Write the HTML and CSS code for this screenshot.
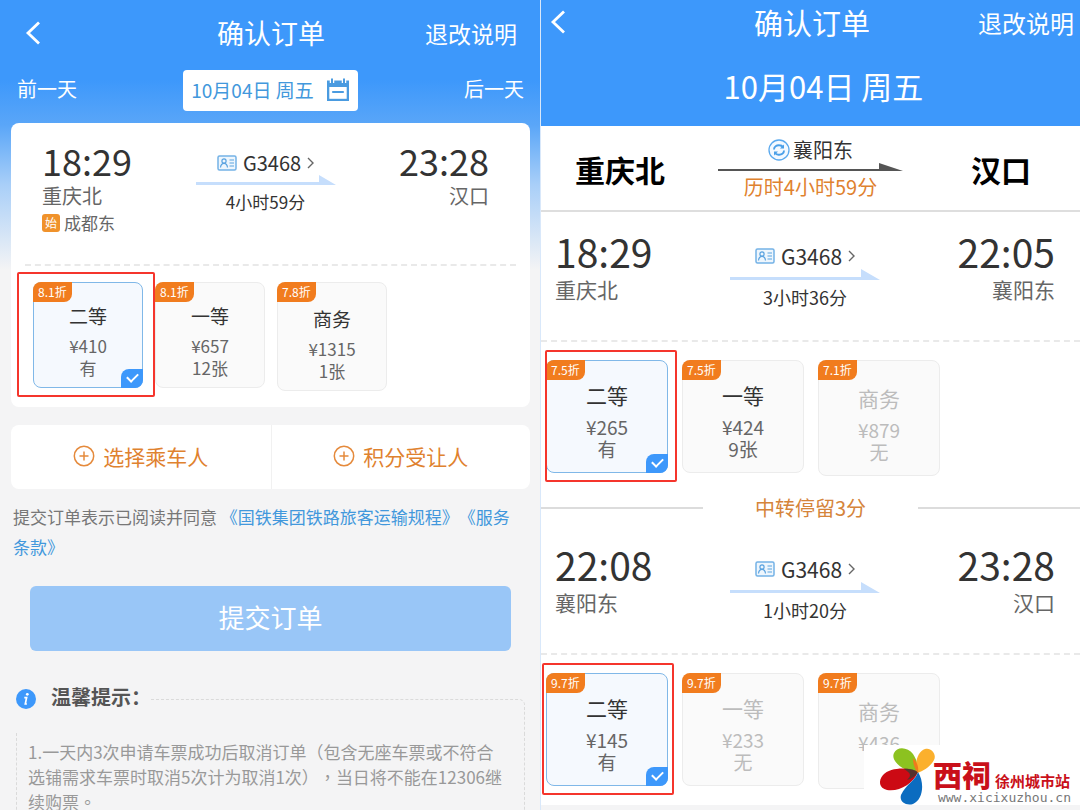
FILE: index.html
```html
<!DOCTYPE html>
<html lang="zh-CN">
<head>
<meta charset="utf-8">
<meta name="viewport" content="width=device-width, initial-scale=1">
<title>确认订单</title>
<link rel="stylesheet" href="styles.css">
</head>
<body>
<svg class="sprite" aria-hidden="true">
  <symbol id="back" viewBox="0 0 16 24"><path d="M14 1.500 3 12l11 10.500" fill="none" stroke="#fff" stroke-width="2.800"/></symbol>
  <symbol id="idcard" viewBox="0 0 20 16">
    <rect x="1" y="1" width="18" height="14" rx="1.500" fill="#eef6fd" stroke="#74b2e6" stroke-width="1.500"/>
    <circle cx="7" cy="6" r="2.100" fill="none" stroke="#5ba3e0" stroke-width="1.200"/>
    <path d="M3.500 12.500c.3-2.600 1.600-4.100 3.500-4.100s3.200 1.500 3.500 4.100M12.500 5h4.500M12.500 8h4.500M12.500 11h4.500" fill="none" stroke="#5ba3e0" stroke-width="1.200"/>
  </symbol>
  <symbol id="next" viewBox="0 0 7 12"><path d="M1 1l5 5-5 5" fill="none" stroke="#666" stroke-width="1.400"/></symbol>
  <symbol id="plus" viewBox="0 0 22 22"><circle cx="11" cy="11" r="9.700" fill="none" stroke="#e58a3c" stroke-width="1.500"/><path d="M11 6.500v9M6.500 11h9" stroke="#e58a3c" stroke-width="1.500"/></symbol>
</svg>
<main class="board">
  <section class="pane pane--direct">
    <header class="bar">
      <button class="bar__back" type="button" aria-label="返回"><svg class="ico-back"><use href="#back"/></svg></button>
      <h1 class="bar__title">确认订单</h1>
      <a class="bar__link" href="#">退改说明</a>
    </header>
    <nav class="days">
      <a class="days__link" href="#">前一天</a>
      <button class="days__date" type="button">10月04日 周五
        <svg class="ico-cal" viewBox="0 0 24 24" aria-hidden="true"><path d="M1 2.500h22V23H1z" fill="#4a9be0"/><path d="M3.300 9h17.400v11.800H3.300z" fill="#fff"/><path d="M6 0v5M18 0v5" stroke="#fff" stroke-width="4.500"/><path d="M6 .5v5M18 .5v5" stroke="#4a9be0" stroke-width="2"/><path d="M7 14h10" stroke="#4a9be0" stroke-width="2.200" stroke-linecap="round"/></svg>
      </button>
      <a class="days__link" href="#">后一天</a>
    </nav>
    <article class="card">
      <div class="leg">
        <div class="stop">
          <time class="stop__time">18:29</time>
          <span class="stop__city">重庆北</span>
          <span class="stop__origin"><b class="stop__mark">始</b>成都东</span>
        </div>
        <div class="ride">
          <a class="ride__train" href="#"><svg class="ico-id"><use href="#idcard"/></svg>G3468<svg class="ico-next"><use href="#next"/></svg></a>
          <svg class="ride__arrow" viewBox="0 0 140 10" aria-hidden="true"><path d="M0 7h123V0l17 10H0z" fill="#c6defc"/></svg>
          <span class="ride__span">4小时59分</span>
        </div>
        <div class="stop stop--end">
          <time class="stop__time">23:28</time>
          <span class="stop__city">汉口</span>
        </div>
      </div>
      <div class="seats">
        <label class="seat seat--on"><span class="seat__tag">8.1折</span><span class="seat__name">二等</span><span class="seat__fare">¥410</span><span class="seat__left">有</span><input class="seat__pick" type="radio" name="direct" checked><i class="frame"></i></label>
        <label class="seat"><span class="seat__tag">8.1折</span><span class="seat__name">一等</span><span class="seat__fare">¥657</span><span class="seat__left">12张</span><input class="seat__pick" type="radio" name="direct"></label>
        <label class="seat seat--low"><span class="seat__tag">7.8折</span><span class="seat__name">商务</span><span class="seat__fare">¥1315</span><span class="seat__left">1张</span><input class="seat__pick" type="radio" name="direct"></label>
      </div>
    </article>
    <div class="people">
      <button class="people__add" type="button"><svg class="ico-plus"><use href="#plus"/></svg>选择乘车人</button>
      <button class="people__add" type="button"><svg class="ico-plus"><use href="#plus"/></svg>积分受让人</button>
    </div>
    <p class="terms">提交订单表示已阅读并同意 <a href="#">《国铁集团铁路旅客运输规程》</a><a href="#">《服务条款》</a></p>
    <button class="submit" type="button">提交订单</button>
    <section class="tips">
      <div class="tips__head">
        <svg class="ico-info" viewBox="0 0 20 20" aria-hidden="true"><circle cx="10" cy="10" r="10" fill="#3d98fb"/><circle cx="11.300" cy="5.300" r="1.400" fill="#fff"/><path d="M8.300 8.700h2.300l-1.300 6.300h1.600" fill="none" stroke="#fff" stroke-width="1.700"/></svg>
        <h2 class="tips__title">温馨提示：</h2>
        <span class="tips__rule"></span>
      </div>
      <p class="tips__text">1.一天内3次申请车票成功后取消订单（包含无座车票或不符合<br>选铺需求车票时取消5次计为取消1次）<span class="mid" lang="zh-TW">，</span>当日将不能在12306继<br>续购票<span class="mid" lang="zh-TW">。</span></p>
    </section>
  </section>

  <section class="pane pane--transfer">
    <header class="top">
      <div class="bar">
        <button class="bar__back" type="button" aria-label="返回"><svg class="ico-back"><use href="#back"/></svg></button>
        <h1 class="bar__title">确认订单</h1>
        <a class="bar__link" href="#">退改说明</a>
      </div>
      <p class="top__date">10月04日 周五</p>
    </header>
    <div class="content">
      <div class="route">
        <strong class="route__city">重庆北</strong>
        <div class="route__via">
          <span class="route__stop"><svg class="ico-swap" viewBox="0 0 22 22" aria-hidden="true"><circle cx="11" cy="11" r="10" fill="#f3f9ff" stroke="#5aa9ee" stroke-width="1.300"/><path d="M6 10.500c0-3 2.500-4.500 5.500-4.200 1.500.1 2.700.7 3.500 1.700M16 11.500c0 3-2.500 4.500-5.500 4.200-1.500-.1-2.700-.7-3.500-1.700" fill="none" stroke="#4a9fe8" stroke-width="1.900"/><path d="M16 5.500v4h-4zM6 16.500v-4h4z" fill="#4a9fe8"/></svg>襄阳东</span>
          <svg class="route__arrow" viewBox="0 0 185 8" aria-hidden="true"><path d="M0 6h161V0l24 8H0z" fill="#555"/></svg>
          <span class="route__total">历时4小时59分</span>
        </div>
        <strong class="route__city route__city--end">汉口</strong>
      </div>
      <div class="leg">
        <div class="stop">
          <time class="stop__time">18:29</time>
          <span class="stop__city">重庆北</span>
        </div>
        <div class="ride">
          <a class="ride__train" href="#"><svg class="ico-id"><use href="#idcard"/></svg>G3468<svg class="ico-next"><use href="#next"/></svg></a>
          <svg class="ride__arrow" viewBox="0 0 150 11" aria-hidden="true"><path d="M0 8h131V0l19 11H0z" fill="#c6defc"/></svg>
          <span class="ride__span">3小时36分</span>
        </div>
        <div class="stop stop--end">
          <time class="stop__time">22:05</time>
          <span class="stop__city">襄阳东</span>
        </div>
      </div>
      <div class="seats">
        <label class="seat seat--on"><span class="seat__tag">7.5折</span><span class="seat__name">二等</span><span class="seat__fare">¥265</span><span class="seat__left">有</span><input class="seat__pick" type="radio" name="first" checked><i class="frame"></i></label>
        <label class="seat"><span class="seat__tag">7.5折</span><span class="seat__name">一等</span><span class="seat__fare">¥424</span><span class="seat__left">9张</span><input class="seat__pick" type="radio" name="first"></label>
        <label class="seat seat--low seat--off"><span class="seat__tag">7.1折</span><span class="seat__name">商务</span><span class="seat__fare">¥879</span><span class="seat__left">无</span><input class="seat__pick" type="radio" name="first" disabled></label>
      </div>
      <p class="change">中转停留3分</p>
      <div class="leg">
        <div class="stop">
          <time class="stop__time">22:08</time>
          <span class="stop__city">襄阳东</span>
        </div>
        <div class="ride">
          <a class="ride__train" href="#"><svg class="ico-id"><use href="#idcard"/></svg>G3468<svg class="ico-next"><use href="#next"/></svg></a>
          <svg class="ride__arrow" viewBox="0 0 150 11" aria-hidden="true"><path d="M0 8h131V0l19 11H0z" fill="#c6defc"/></svg>
          <span class="ride__span">1小时20分</span>
        </div>
        <div class="stop stop--end">
          <time class="stop__time">23:28</time>
          <span class="stop__city">汉口</span>
        </div>
      </div>
      <div class="seats">
        <label class="seat seat--on"><span class="seat__tag">9.7折</span><span class="seat__name">二等</span><span class="seat__fare">¥145</span><span class="seat__left">有</span><input class="seat__pick" type="radio" name="second" checked><i class="frame frame--left"></i></label>
        <label class="seat seat--off"><span class="seat__tag">9.7折</span><span class="seat__name">一等</span><span class="seat__fare">¥233</span><span class="seat__left">无</span><input class="seat__pick" type="radio" name="second" disabled></label>
        <label class="seat seat--low seat--off"><span class="seat__tag">9.7折</span><span class="seat__name">商务</span><span class="seat__fare">¥436</span><span class="seat__left">无</span><input class="seat__pick" type="radio" name="second" disabled></label>
      </div>
    </div>
  </section>
  <aside class="brand">
    <svg class="brand__flower" viewBox="0 0 60 60" aria-hidden="true">
      <path d="M42 28C28 27 14 16 18 8c3-7 14-6 19 1 4 6 6 13 5 19z" fill="#8cc220"/>
      <path d="M41 28C38 18 42 6 49 4c6-2 12 5 9 11-3 6-10 11-17 13z" fill="#fbb02d"/>
      <path d="M42 27C34 22 14 22 7 30c-5 6-4 13 4 15 12 2 26-6 31-18z" fill="#cc0a14"/>
      <path d="M42 27c-2 8-12 12-17 23-2 7 5 11 12 9 10-4 12-21 5-32z" fill="#0b6cc0"/>
      <path d="M28 24c4-1 10 0 14 3-2 4-7 7-11 8 4-4 5-6-3-11z" fill="#17463c" opacity=".65"/>
      <path d="M37 13c4 4 6 9 5 15-4-5-5-10-5-15z" fill="#f07a1c"/>
    </svg>
    <div class="brand__words">
      <span class="brand__name"><b class="brand__big">西祠</b>徐州城市站</span>
      <span class="brand__url">www.xicixuzhou.cn</span>
    </div>
  </aside>
</main>
</body>
</html>
```
FILE: styles.css
```css
* { box-sizing: border-box; }
body, h1, h2, p { margin: 0; }
body {
  font-family: "Noto Sans CJK SC", sans-serif;
  color: #333;
  text-spacing-trim: space-all;
}
button { font: inherit; color: inherit; border: 0; padding: 0; background: none; cursor: pointer; }
a { color: inherit; text-decoration: none; }
svg { display: block; flex: none; }
.sprite { position: absolute; width: 0; height: 0; }

.board {
  position: relative;
  display: grid;
  grid-template-columns: 1fr 1fr;
  height: 100vh;
  overflow: hidden;
}
.pane { min-width: 0; overflow: hidden; }
.pane--direct {
  padding: 0 10px 0 11px;
  background: linear-gradient(#3d98fb 0, #3d98fb 80px, #5aa6f8 125px, #a9cff8 185px, #f4f4f5 270px);
}
.pane--transfer { background: #f4f4f5; border-left: 1px solid #d9e8fa; }

/* title bar */
.bar {
  display: grid;
  grid-template-columns: 1fr auto 1fr;
  align-items: center;
  height: 65px;
  padding: 0 13px 0 14px;
  color: #fff;
}
.bar__back { justify-self: start; }
.bar__title { font-size: 27px; font-weight: 400; line-height: 40px; }
.bar__link { justify-self: end; font-size: 23px; }
.ico-back { width: 16px; height: 24px; }
.top { background: #3d98fb; color: #fff; }
.top .bar { height: 44px; padding: 0 6px 0 9px; }
.top .bar__title { font-size: 29px; }
.top .bar__link { font-size: 24px; }
.top__date { padding: 2px 0 0 26px; font-size: 31px; line-height: 80px; text-align: center; }

/* day switcher */
.days {
  display: flex;
  justify-content: space-between;
  padding: 5px 6px 12px;
  color: #fff;
  font-size: 20px;
  line-height: 37px;
}
.days__date {
  display: flex;
  align-items: center;
  gap: 12px;
  height: 41px;
  padding: 0 8px 2px;
  border-radius: 4px;
  background: #fff;
  color: #4298dc;
  font-size: 19px;
}
.ico-cal { width: 24px; height: 24px; }

/* journey */
.card { border-radius: 8px; background: #fff; }
.leg {
  display: grid;
  grid-template-columns: 1fr auto 1fr;
  padding: 16px 25px 30px 14px;
  border-bottom: 2px dashed #e9e9e9;
}
.card .leg { margin: 0 14px; padding: 16px 27px 29px 17px; }
.content { padding-bottom: 16px; background: #fff; }
.stop { display: flex; flex-direction: column; }
.stop--end { align-items: flex-end; }
.stop__time { font-size: 39px; line-height: 46px; }
.stop__city { color: #666; font-size: 21px; line-height: 30px; }
.card .stop__time { font-size: 36px; line-height: 42px; }
.card .stop__city { font-size: 20px; line-height: 30px; }
.stop__origin { display: flex; align-items: center; gap: 4px; color: #666; font-size: 17px; line-height: 24px; }
.stop__mark {
  width: 18px;
  border-radius: 3px;
  background: #f0922b;
  color: #fff;
  font-size: 12px;
  font-weight: 400;
  line-height: 18px;
  text-align: center;
}
.ride { display: flex; flex-direction: column; align-items: center; padding-top: 15px; }
.ride__train { display: flex; align-items: center; gap: 6px; font-size: 21px; line-height: 26px; }
.ride__arrow { width: 150px; height: 11px; }
.ride__span { margin-top: 4px; font-size: 18px; line-height: 26px; }
.card .ride { padding-top: 12px; }
.card .ride__train { line-height: 24px; font-size: 20px; }
.card .ride__arrow { width: 140px; height: 10px; }
.card .ride__span { font-size: 17px; }
.ico-id { width: 20px; height: 16px; }
.ico-next { width: 7px; height: 12px; }

/* seat classes */
.seats { display: flex; align-items: flex-start; gap: 14px; padding: 18px 5px 0; }
.card .seats { gap: 12px; padding: 16px 22px; }
.seat {
  position: relative;
  display: flex;
  flex-direction: column;
  align-items: center;
  width: 122px;
  padding: 22px 0 12px;
  border: 1px solid #ececec;
  border-radius: 8px;
  background: #fafafa;
  color: #666;
  font-size: 19px;
  line-height: 22px;
}
.seat--low { padding-top: 25px; }
.seat__name { margin-bottom: 9px; color: #333; font-size: 21px; line-height: 24px; }
.card .seat { width: 110px; padding: 21px 0 8px; font-size: 17px; }
.card .seat--low { padding-top: 24px; }
.card .seat__name { margin-bottom: 7px; font-size: 19px; }
.seat--on { border-color: #80b8e8; background: #f5f9fe; }
.seat--off, .seat--off .seat__name { color: #bcbcbc; }
.seat__tag {
  position: absolute;
  top: -1px;
  left: -1px;
  padding: 0 5px;
  border-radius: 8px 0;
  background: #f17c1e;
  color: #fff;
  font-size: 12px;
  line-height: 20px;
}
.seat__pick {
  position: absolute;
  right: -1px;
  bottom: -1px;
  width: 22px;
  height: 19px;
  margin: 0;
  border-radius: 8px 0;
  appearance: none;
}
.seat__pick:checked { background: #3d98fb; }
.seat__pick:checked::before {
  content: "";
  position: absolute;
  top: 4px;
  left: 6px;
  width: 9px;
  height: 5px;
  border: solid #fff;
  border-width: 0 0 2px 2px;
  transform: rotate(-45deg);
}
.frame { position: absolute; inset: -11px -10px -10px -2px; border: 2px solid #f5352c; border-radius: 2px; }
.frame--left { inset: -11px -7px -10px -5px; }
.card .frame { inset: -11px -13px -10px -17px; }

/* passengers, terms, submit */
.people { display: grid; grid-template-columns: 1fr 1fr; margin-top: 18px; border-radius: 8px; background: #fff; }
.people__add {
  display: flex;
  align-items: center;
  justify-content: center;
  gap: 8px;
  height: 64px;
  padding-bottom: 3px;
  color: #df822f;
  font-size: 21px;
}
.people__add + .people__add { border-left: 1px solid #f1f1f1; }
.ico-plus { width: 22px; height: 22px; }
.terms { margin: 13px 12px 0 2px; color: #777; font-size: 17px; line-height: 30px; word-break: break-all; }
.terms a { color: #4298dc; }
.submit {
  display: block;
  width: calc(100% - 38px);
  margin: 24px 19px 0;
  padding-bottom: 4px;
  border-radius: 6px;
  background: #99c6f7;
  color: #fff;
  font-size: 26px;
  line-height: 61px;
}

/* notes */
.tips { margin: 31px 5px 0; }
.tips__head { display: flex; height: 51px; }
.ico-info { width: 20px; height: 20px; margin-top: 7px; }
.tips__title { margin: 0 0 0 15px; color: #555; font-size: 20px; font-weight: 700; line-height: 30px; }
.tips__rule {
  flex: 1;
  margin-top: 17px;
  border: dashed #dadada;
  border-width: 1px 1px 0 0;
  border-top-right-radius: 6px;
}
.tips__text {
  padding: 6px 0 40px 11px;
  border: dashed #dadada;
  border-width: 0 1px;
  color: #999;
  font-size: 17px;
  line-height: 25px;
  white-space: nowrap;
}
.mid { font-family: "Noto Sans CJK TC", sans-serif; }

/* transfer summary */
.route {
  display: grid;
  grid-template-columns: 1fr auto 1fr;
  align-items: center;
  padding: 11px 34px 10px;
  border-bottom: 2px solid #dedede;
}
.route__city { color: #000; font-size: 30px; font-weight: 700; line-height: 44px; }
.route__city--end { justify-self: end; padding-right: 15px; }
.route__via { display: flex; flex-direction: column; align-items: center; }
.route__stop { display: flex; align-items: center; gap: 3px; font-size: 20px; line-height: 26px; }
.ico-swap { width: 22px; height: 22px; }
.route__arrow { width: 185px; height: 8px; }
.route__total { margin-top: 3px; color: #df822f; font-size: 20px; line-height: 26px; }
.change {
  display: flex;
  align-items: center;
  justify-content: space-between;
  margin: 18px 0 3px;
  color: #d5843a;
  font-size: 20px;
  line-height: 28px;
}
.change::before, .change::after { content: ""; width: 30%; border-top: 2px solid #dcdcdc; }

/* site mark */
.brand {
  position: absolute;
  right: 0;
  bottom: 5px;
  display: flex;
  height: 60px;
  padding: 0 9px 0 12px;
  background: #fff;
}
.brand__flower { width: 60px; height: 60px; }
.brand__words { display: flex; flex-direction: column; justify-content: flex-end; margin-left: -3px; }
.brand__name { color: #c9101a; font-size: 15px; font-weight: 700; line-height: 20px; }
.brand__big { margin-right: 4px; font-size: 29px; font-weight: 900; }
.brand__url { padding-left: 5px; color: #777; font-family: "DejaVu Sans Mono", monospace; font-size: 13px; line-height: 14px; }
```
